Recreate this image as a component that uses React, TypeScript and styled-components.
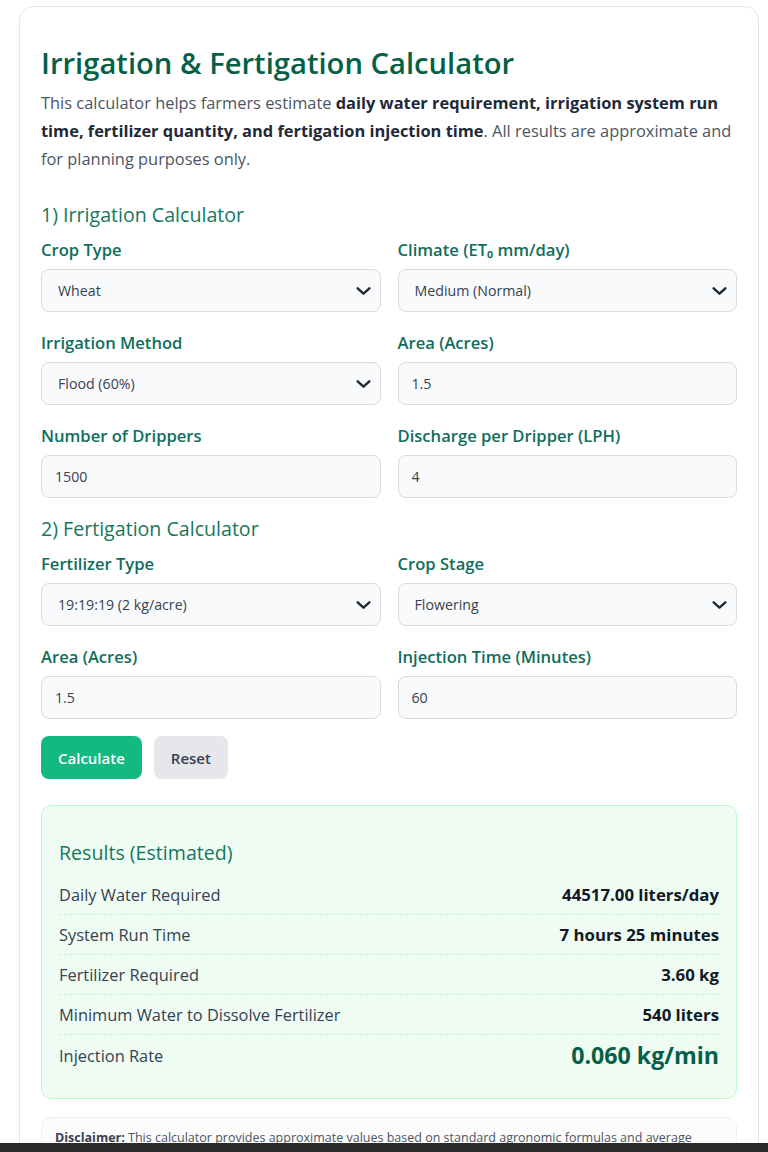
import React from "react";
import styled, { createGlobalStyle } from "styled-components";

const GlobalStyle = createGlobalStyle`
  * { box-sizing: border-box; }
  body {
    margin: 0;
    background: #ffffff;
    font-family: "Open Sans", "Noto Sans", sans-serif;
    color: #374151;
  }
`;

const Page = styled.div`
  padding: 6px 10px 0 19px;
  height: 1152px;
  overflow: hidden;
`;

const Card = styled.div`
  width: 740px;
  border: 1px solid #e5e7eb;
  border-radius: 14px;
  padding: 28px 21px 40px;
  background: #fff;
`;

const Title = styled.h1`
  margin: 10px 0 8px;
  font-size: 29.2px;
  font-weight: 600;
  line-height: 36px;
  color: #065f46;
`;

const Intro = styled.p`
  margin: 0 0 28px;
  font-size: 16.4px;
  line-height: 28px;
  color: #4b5563;

  b {
    font-weight: 700;
    color: #1f2937;
  }
`;

const SectionTitle = styled.h2`
  margin: 0 0 10px;
  font-size: 19.6px;
  font-weight: 400;
  line-height: 28px;
  color: #17775d;
`;

const Grid = styled.div`
  display: grid;
  grid-template-columns: 1fr 1fr;
  column-gap: 17px;
  row-gap: 20px;
  margin-bottom: 17px;
`;

const Field = styled.div`
  display: flex;
  flex-direction: column;
`;

const Label = styled.label`
  font-size: 16.6px;
  font-weight: 600;
  line-height: 22px;
  color: #0f6e5c;
  margin-bottom: 8px;
`;

const controlCss = `
  width: 100%;
  height: 43px;
  border: 1px solid #d7dbe0;
  border-radius: 8px;
  background: #f9fafb;
  padding: 0 16px;
  font-family: "Open Sans", "Noto Sans", sans-serif;
  font-size: 14.2px;
  color: #374151;
  outline: none;
`;

const Input = styled.input`
  ${controlCss}
  padding-left: 13px;
`;

const SelectWrap = styled.div`
  position: relative;
`;

const Select = styled.select`
  ${controlCss}
  appearance: none;
  -webkit-appearance: none;
`;

const Chevron = styled.svg`
  position: absolute;
  right: 9px;
  top: 50%;
  width: 17px;
  height: 17px;
  transform: translateY(-50%);
  pointer-events: none;
`;

const Actions = styled.div`
  display: flex;
  gap: 12px;
  margin: 0 0 26px;
`;

const Button = styled.button<{ $primary?: boolean }>`
  height: 43px;
  padding: 0 17px;
  border: none;
  border-radius: 8px;
  font-family: "Open Sans", "Noto Sans", sans-serif;
  font-size: 15px;
  font-weight: 600;
  background: ${(p) => (p.$primary ? "#13b981" : "#e5e7eb")};
  color: ${(p) => (p.$primary ? "#ffffff" : "#374151")};
`;

const Results = styled.div`
  border: 1px solid #bbf7d0;
  border-radius: 10px;
  background: #effcf3;
  padding: 33px 17px 23px;
  margin-bottom: 18px;
`;

const ResultsTitle = styled.h3`
  margin: 0 0 8px;
  font-size: 19.6px;
  font-weight: 400;
  line-height: 28px;
  color: #17775d;
`;

const ResultRow = styled.div<{ $last?: boolean }>`
  display: flex;
  justify-content: space-between;
  align-items: center;
  height: 40px;
  border-bottom: ${(p) => (p.$last ? "none" : "1px dashed #c9eedb")};
  font-size: 16.4px;
  color: #374151;
`;

const Value = styled.span<{ $big?: boolean }>`
  font-weight: 700;
  color: ${(p) => (p.$big ? "#065f46" : "#111827")};
  font-size: ${(p) => (p.$big ? "23.2px" : "16.8px")};
`;

const Disclaimer = styled.div`
  border: 1px solid #eef0f2;
  border-radius: 10px;
  background: #fbfbfc;
  padding: 11px 22px 14px 13px;
  font-size: 12.5px;
  line-height: 18px;
  color: #4b5563;

  b {
    color: #374151;
  }
`;

const Taskbar = styled.div`
  position: fixed;
  left: 0;
  right: 0;
  bottom: 0;
  height: 9px;
  background: #2b2a2a;
`;

const ChevronIcon = () => (
  <Chevron viewBox="0 0 16 16" fill="none">
    <path d="M2.5 5.5 L8 10.5 L13.5 5.5" stroke="#1f2937" strokeWidth="2.3" strokeLinecap="round" strokeLinejoin="round" />
  </Chevron>
);

const SelectField = ({ label, value }: { label: string; value: string }) => (
  <Field>
    <Label>{label}</Label>
    <SelectWrap>
      <Select defaultValue={value}>
        <option>{value}</option>
      </Select>
      <ChevronIcon />
    </SelectWrap>
  </Field>
);

const InputField = ({ label, value }: { label: string; value: string }) => (
  <Field>
    <Label>{label}</Label>
    <Input defaultValue={value} />
  </Field>
);

const results = [
  { label: "Daily Water Required", value: "44517.00 liters/day" },
  { label: "System Run Time", value: "7 hours 25 minutes" },
  { label: "Fertilizer Required", value: "3.60 kg" },
  { label: "Minimum Water to Dissolve Fertilizer", value: "540 liters" },
];

export default function App() {
  return (
    <>
      <GlobalStyle />
      <Page>
        <Card>
          <Title>Irrigation &amp; Fertigation Calculator</Title>
          <Intro>
            This calculator helps farmers estimate{" "}
            <b>daily water requirement, irrigation system run time, fertilizer quantity, and fertigation injection time</b>.
            All results are approximate and for planning purposes only.
          </Intro>

          <SectionTitle>1) Irrigation Calculator</SectionTitle>
          <Grid>
            <SelectField label="Crop Type" value="Wheat" />
            <SelectField label="Climate (ET₀ mm/day)" value="Medium (Normal)" />
            <SelectField label="Irrigation Method" value="Flood (60%)" />
            <InputField label="Area (Acres)" value="1.5" />
            <InputField label="Number of Drippers" value="1500" />
            <InputField label="Discharge per Dripper (LPH)" value="4" />
          </Grid>

          <SectionTitle>2) Fertigation Calculator</SectionTitle>
          <Grid>
            <SelectField label="Fertilizer Type" value="19:19:19 (2 kg/acre)" />
            <SelectField label="Crop Stage" value="Flowering" />
            <InputField label="Area (Acres)" value="1.5" />
            <InputField label="Injection Time (Minutes)" value="60" />
          </Grid>

          <Actions>
            <Button $primary>Calculate</Button>
            <Button>Reset</Button>
          </Actions>

          <Results>
            <ResultsTitle>Results (Estimated)</ResultsTitle>
            {results.map((r) => (
              <ResultRow key={r.label}>
                <span>{r.label}</span>
                <Value>{r.value}</Value>
              </ResultRow>
            ))}
            <ResultRow $last>
              <span>Injection Rate</span>
              <Value $big>0.060 kg/min</Value>
            </ResultRow>
          </Results>

          <Disclaimer>
            <b>Disclaimer:</b> This calculator provides approximate values based on standard agronomic formulas and average
            field conditions. Actual requirements may vary with soil type, weather, crop variety and system efficiency.
          </Disclaimer>
        </Card>
      </Page>
      <Taskbar />
    </>
  );
}
